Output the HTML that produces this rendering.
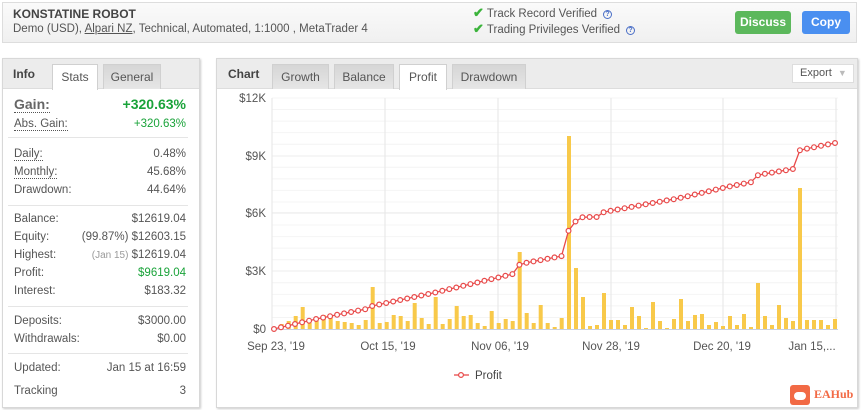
<!DOCTYPE html>
<html><head><meta charset="utf-8"><style>
*{box-sizing:border-box;margin:0;padding:0}
body{width:862px;height:410px;background:#fff;font-family:"Liberation Sans",Arial,sans-serif;font-size:11.5px;color:#555;position:relative;overflow:hidden}
.a{position:absolute;white-space:nowrap}
.hdr{left:2px;top:2px;width:855px;height:41px;border:1px solid #ddd;background:linear-gradient(#fafafa,#f0f0f0)}
.btn{position:absolute;top:11px;height:23px;border-radius:3px;color:#fff;font-weight:bold;font-size:12px;text-align:center;line-height:23px}
.panel{border:1px solid #d8d8d8;box-shadow:1px 1px 2px #ccc;background:#fff}
.tabbar{position:absolute;left:0;top:0;right:0;height:30px;background:#ececec;border-bottom:1px solid #ddd}
.tab{position:absolute;top:5px;height:25px;background:linear-gradient(#d6d6d6,#e6e6e6);border:1px solid #d0d0d0;border-bottom:none;text-align:center;line-height:24px;color:#555;font-size:12px}
.tab.on{background:#fff;height:26px}
.l{left:14px;z-index:2}.r{left:0;width:186px;text-align:right;z-index:2}
.sep{position:absolute;left:8px;width:180px;height:1px;background:#e5e5e5;z-index:2}
.dot{border-bottom:1px dotted #555}
.g{color:#1aa33a}
.q{display:inline-block;width:9px;height:9px;border:1px solid #4a6fc7;border-radius:50%;font-size:7px;line-height:7px;text-align:center;color:#4a6fc7;vertical-align:1px;margin-left:6px;font-weight:bold}
.ck{color:#3bb33b;font-weight:bold;font-size:13px}
</style></head><body>
<div class="a hdr"></div>
<div class="a" style="left:13px;top:7px;font-weight:bold;font-size:12px;color:#444">KONSTATINE ROBOT</div>
<div class="a" style="left:13px;top:23px;font-size:11.5px;color:#555">Demo (USD), <span style="text-decoration:underline">Alpari NZ</span>, Technical, Automated, 1:1000 , MetaTrader 4</div>
<div class="a" style="left:473px;top:5px;font-size:11.5px"><span class="ck">✔</span> Track Record Verified<span class="q">?</span></div>
<div class="a" style="left:473px;top:21px;font-size:11.5px"><span class="ck">✔</span> Trading Privileges Verified<span class="q">?</span></div>
<div class="btn" style="left:735px;width:56px;background:#5cb85c">Discuss</div>
<div class="btn" style="left:802px;width:48px;background:#4a8ff0">Copy</div>

<div class="a panel" style="left:2px;top:58px;width:198px;height:350px">
 <div class="tabbar"></div>
 <div class="a" style="left:10px;top:8px;font-weight:bold;font-size:12px;color:#444">Info</div>
 <div class="tab on" style="left:49px;width:46px">Stats</div>
 <div class="tab" style="left:100px;width:58px">General</div>
</div>
<div class="a l dot" style="top:96px;font-size:14px;font-weight:bold;color:#666">Gain:</div>
<div class="a r g" style="top:96px;font-size:14px;font-weight:bold">+320.63%</div>
<div class="a l dot" style="top:118px">Abs. Gain:</div><div class="a r g" style="top:118px">+320.63%</div>
<div class="sep" style="top:137px"></div>
<div class="a l dot" style="top:148px">Daily:</div><div class="a r" style="top:148px">0.48%</div>
<div class="a l dot" style="top:166px">Monthly:</div><div class="a r" style="top:166px">45.68%</div>
<div class="a l" style="top:184px">Drawdown:</div><div class="a r" style="top:184px">44.64%</div>
<div class="sep" style="top:205px"></div>
<div class="a l" style="top:213px">Balance:</div><div class="a r" style="top:213px">$12619.04</div>
<div class="a l" style="top:231px">Equity:</div><div class="a r" style="top:231px">(99.87%) $12603.15</div>
<div class="a l" style="top:249px">Highest:</div><div class="a r" style="top:249px"><span style="color:#999;font-size:10px">(Jan 15)</span> $12619.04</div>
<div class="a l" style="top:267px">Profit:</div><div class="a r g" style="top:267px">$9619.04</div>
<div class="a l" style="top:285px">Interest:</div><div class="a r" style="top:285px">$183.32</div>
<div class="sep" style="top:306px"></div>
<div class="a l" style="top:315px">Deposits:</div><div class="a r" style="top:315px">$3000.00</div>
<div class="a l" style="top:333px">Withdrawals:</div><div class="a r" style="top:333px">$0.00</div>
<div class="sep" style="top:353px"></div>
<div class="a l" style="top:362px">Updated:</div><div class="a r" style="top:362px">Jan 15 at 16:59</div>
<div class="a l" style="top:385px">Tracking</div><div class="a r" style="top:385px">3</div>

<div class="a panel" style="left:216px;top:58px;width:642px;height:350px">
 <div class="tabbar"></div>
 <div class="a" style="left:11px;top:8px;font-weight:bold;font-size:12px;color:#444">Chart</div>
 <div class="tab" style="left:55px;width:57px">Growth</div>
 <div class="tab" style="left:117px;width:60px">Balance</div>
 <div class="tab on" style="left:182px;width:48px">Profit</div>
 <div class="tab" style="left:235px;width:74px">Drawdown</div>
 <div class="a" style="left:575px;top:5px;width:62px;height:19px;border:1px solid #ddd;background:#fff;font-size:11px;line-height:17px;padding-left:7px;color:#555">Export <span style="color:#bbb;font-size:9px;margin-left:3px">▼</span></div>
</div>
<svg id="ch" class="a" style="left:0;top:0" width="862" height="410"></svg>
<div class="a" style="left:790px;top:385px;width:20px;height:20px;background:#f26a45;border-radius:3px"></div>
<div class="a" style="left:794px;top:392px;width:12px;height:8px;background:#fff;border-radius:4px"></div>
<div class="a" style="left:814px;top:387px;color:#f26a45;font-weight:bold;font-size:12px;font-family:'Liberation Serif',serif">EAHub</div>
<script>
var s='';
[98,156,213,271].forEach(function(y){s+='<line x1="272" x2="838" y1="'+y+'" y2="'+y+'" stroke="#e6e6e6"/>';});
for(var y=98;y<329;y+=11.55)s+='<line x1="272" x2="838" y1="'+y+'" y2="'+y+'" stroke="#f4f4f4"/>';
[272,385,498,611,723,836].forEach(function(x){s+='<line x1="'+x+'" x2="'+x+'" y1="98" y2="329" stroke="#e6e6e6"/>';});
var yl=[['$12K',98],['$9K',156],['$6K',213],['$3K',271],['$0',329]];
yl.forEach(function(a){s+='<text x="266" y="'+(a[1]+4)+'" text-anchor="end" font-size="11.5" fill="#555" font-family="Liberation Sans">'+a[0]+'</text>';});
var xl=[['Sep 23, \'19',276],['Oct 15, \'19',388],['Nov 06, \'19',500],['Nov 28, \'19',611],['Dec 20, \'19',722],['Jan 15,...',812]];
xl.forEach(function(a){s+='<text x="'+a[1]+'" y="350" text-anchor="middle" font-size="11.5" fill="#555" font-family="Liberation Sans">'+a[0]+'</text>';});
var H1=[5,8,13,22,6,8,14,11,8,7,6,4,9,42,6,7,14,13,8,26,11,5,32,5,10,23,13,14,6,3,18,6,10,8,77,16,6,24,6,2,11];
var H2=[193,61,32,3,4,36,9,9,4,22,13,1,27,8,1,10,30,8,14,15,4,7,3,13,4,15,2,46,13,4,24,11,8,141,9,9,9,4,10];
var d='';
H1.forEach(function(h,i){var x=281.7+i*7;d+='M'+(x-2)+' 329h4v'+(-h)+'h-4z';});
H2.forEach(function(h,i){var x=569+i*7;d+='M'+(x-2)+' 329h4v'+(-h)+'h-4z';});
s+='<path d="'+d+'" fill="#f8c94a"/>';
s+='<line x1="272" x2="838" y1="329.5" y2="329.5" stroke="#c8d0e0"/>';
var A=[[274,329],[316,319],[366,309],[372,306],[433,293],[513,274],[520,264],[562,256],[569,229],[576,221],[583,217],[597,217],[604,212],[680,198],[727,187],[752,182],[758,175],[793,169],[800,150],[835,143]];
function ly(x){for(var i=0;i<A.length-1;i++){if(x<=A[i+1][0]){var t=(x-A[i][0])/(A[i+1][0]-A[i][0]);return A[i][1]+t*(A[i+1][1]-A[i][1]);}}return 143;}
var pts=[],n=81;for(var i=0;i<n;i++){var x=274+i*(835-274)/(n-1);pts.push([x,ly(x)]);}
s+='<polyline fill="none" stroke="#e84a4a" stroke-width="1.3" points="'+pts.map(function(p){return p[0].toFixed(1)+','+p[1].toFixed(1)}).join(' ')+'"/>';
pts.forEach(function(p){s+='<circle cx="'+p[0].toFixed(1)+'" cy="'+p[1].toFixed(1)+'" r="2.4" fill="#fff" stroke="#e84a4a" stroke-width="1.2"/>';});
s+='<line x1="454" x2="469" y1="375" y2="375" stroke="#e84a4a" stroke-width="1.3"/><circle cx="461" cy="375" r="2.4" fill="#fff" stroke="#e84a4a" stroke-width="1.2"/>';
s+='<text x="475" y="379" font-size="11.5" fill="#444" font-family="Liberation Sans">Profit</text>';
document.getElementById('ch').innerHTML=s;
</script>
</body></html>
